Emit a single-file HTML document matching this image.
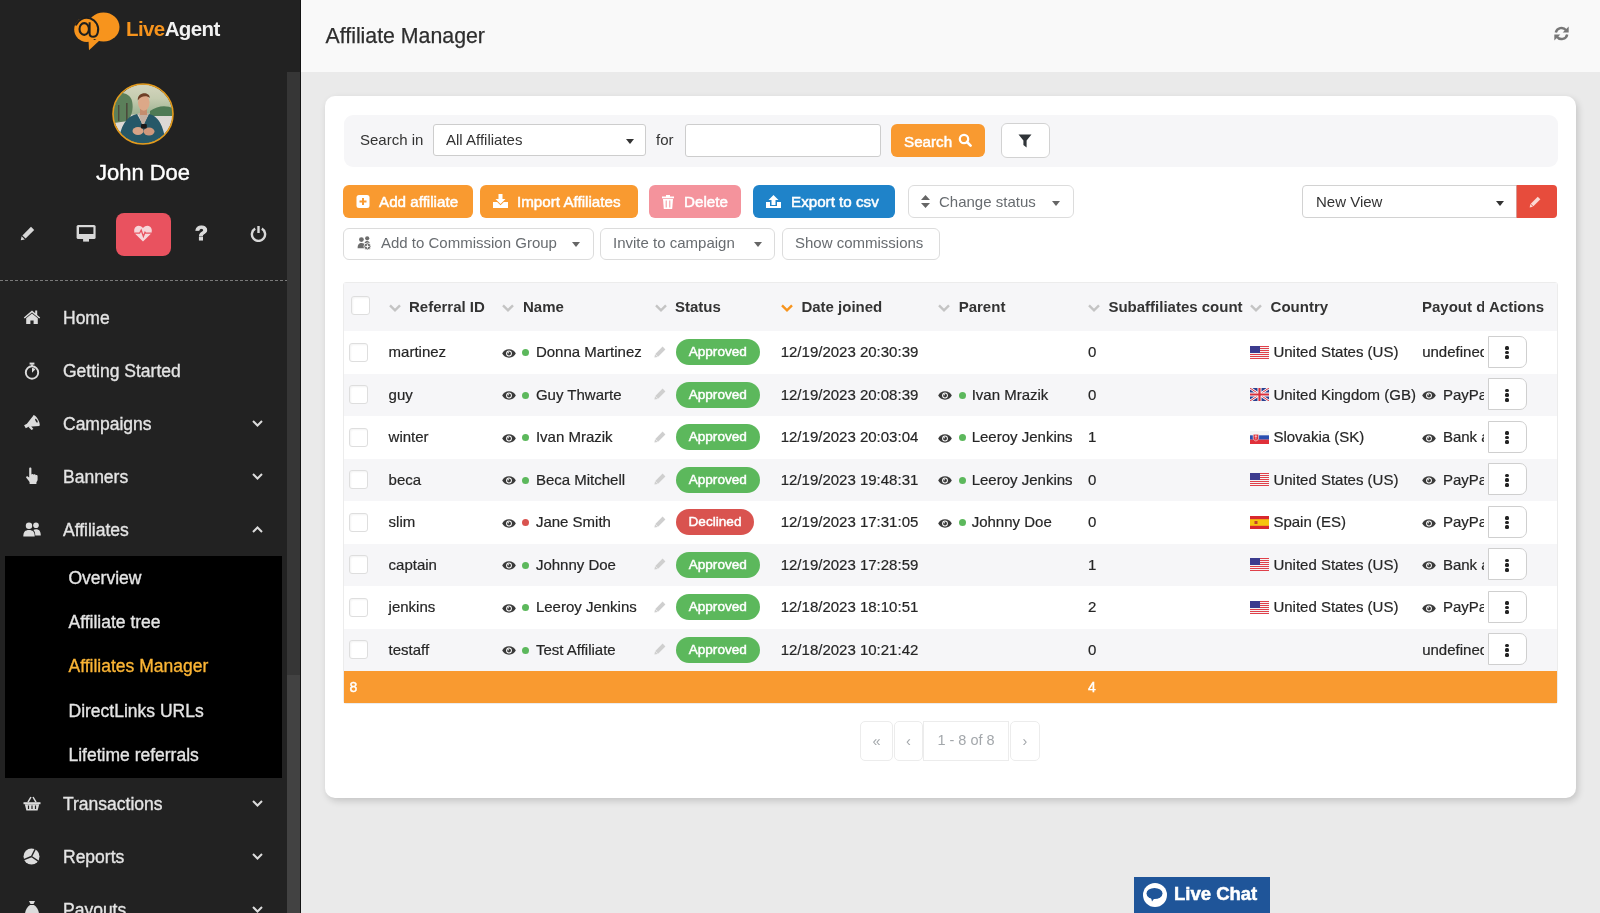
<!DOCTYPE html>
<html><head><meta charset="utf-8"><title>Affiliate Manager</title>
<style>
*{box-sizing:border-box;margin:0;padding:0}
html,body{width:1600px;height:913px;overflow:hidden;background:#eaeaea;font-family:"Liberation Sans", sans-serif;color:#333}
.abs{position:absolute}
#sb{position:absolute;left:0;top:0;width:300px;height:913px;background:#222222;overflow:hidden}
.mi{position:absolute;left:63px;font-size:17.5px;color:#e4e4e4;-webkit-text-stroke:0.35px #e4e4e4;white-space:nowrap;line-height:20px}
.mic{position:absolute;left:23px;width:18px;height:18px}
.chev{position:absolute;left:252px}
.smi{position:absolute;left:68.5px;font-size:17.5px;color:#e4e4e4;-webkit-text-stroke:0.35px currentColor;white-space:nowrap;line-height:20px}
#hdr{position:absolute;left:300px;top:0;width:1300px;height:72px;background:#f9f9f9}
#card{position:absolute;left:325px;top:96px;width:1251px;height:702px;background:#fff;border-radius:10px;box-shadow:2px 3px 7px rgba(0,0,0,.16)}
.btn{position:absolute;top:185px;height:33px;border-radius:6px;color:#fff;font-size:14px;font-weight:bold;white-space:nowrap;line-height:33px}
.obtn{position:absolute;top:228px;height:32px;border-radius:6px;border:1px solid #dcdcdc;background:#fff;color:#666;font-size:15px;white-space:nowrap;line-height:30px}
.cell{position:absolute;font-size:15px;color:#262626;white-space:nowrap;line-height:18px;-webkit-text-stroke:0.2px #262626}
.th{position:absolute;top:298px;font-size:15px;font-weight:bold;color:#333;white-space:nowrap;line-height:18px}
.hch{position:absolute;top:304px}
.cb{position:absolute;width:19px;height:19px;border:1px solid #dedede;border-radius:3px;background:#fff;box-shadow:inset 1px 1px 2px rgba(0,0,0,.05)}
.badge{position:absolute;height:26px;border-radius:13px;color:#fff;font-size:13.6px;-webkit-text-stroke:0.45px #fff;text-align:center;line-height:26px}
.dot{position:absolute;width:7px;height:7px;border-radius:50%}
.eye{position:absolute}
.act{position:absolute;left:1488px;width:39px;height:32px;border:1px solid #cfcfcf;border-radius:0 7px 7px 0;background:#fff}
.act i{position:absolute;left:16px;width:4px;height:3.8px;border-radius:1.5px;background:#222}
.pg{position:absolute;top:721px;height:40px;border:1px solid #ececec;background:#fff;color:#a3a7ab;text-align:center;line-height:38px;font-size:14.5px}
</style></head><body><div id="root" style="position:absolute;left:0;top:0;width:1600px;height:913px;overflow:hidden;will-change:transform">

<div id="sb">
<div class="abs" style="left:287px;top:72px;width:12.5px;height:603px;background:#363636"></div>
<div class="abs" style="left:287px;top:675px;width:12.5px;height:238px;background:#424242"></div>
<svg class="abs" style="left:74px;top:11px" width="48" height="40" viewBox="0 0 48 40">
<ellipse cx="29.5" cy="16" rx="16" ry="14.6" fill="#f7941d"/>
<path d="M14.5 29 L15 39.2 L26 29z" fill="#f7941d"/>
<circle cx="12.6" cy="18.6" r="12.4" fill="#f7941d"/>
<path d="M1.7 14.5 A11.6 11.6 0 0 1 23.8 21.5 Q22.8 25.8 19.2 25.8 Q15.6 25.8 15.6 22.5 V11.2" fill="none" stroke="#1e1e1e" stroke-width="2"/>
<ellipse cx="10.2" cy="18" rx="4.7" ry="5.9" fill="none" stroke="#1e1e1e" stroke-width="2.1"/>
</svg>
<div class="abs" style="left:126px;top:15px;font-size:20.5px;font-weight:bold;letter-spacing:-0.6px;line-height:28px;white-space:nowrap"><span style="color:#f7941d">Live</span><span style="color:#f2f2f2">Agent</span></div>
<svg class="abs" style="left:112px;top:83px" width="62" height="62" viewBox="0 0 62 62">
<defs><clipPath id="av"><circle cx="31" cy="31" r="29.5"/></clipPath>
<linearGradient id="avbg" x1="0" y1="0" x2="0" y2="1"><stop offset="0" stop-color="#d6d6bf"/><stop offset=".25" stop-color="#c5ccb0"/><stop offset=".5" stop-color="#9fb393"/><stop offset=".52" stop-color="#dcd8d4"/><stop offset="1" stop-color="#e0dcd8"/></linearGradient></defs>
<g clip-path="url(#av)">
<rect width="62" height="62" fill="url(#avbg)"/>
<path d="M2 12 C8 8 18 10 20 18 C22 26 19 34 16 38 L2 40z" fill="#5b7f5a"/>
<path d="M38 28 C46 22 56 22 62 26 V33 H38z" fill="#4f7a55"/>
<rect x="14" y="20" width="1.6" height="18" fill="#4b4a3c"/>
<rect x="6" y="22" width="1.4" height="16" fill="#4b4a3c"/>
<path d="M6 62 C8 44 14 33 25 31 L31 42 L37 31 C46 33 52 42 54 62z" fill="#265868"/>
<path d="M26 30 L31 44 L37 30z" fill="#c4b0a2"/>
<rect x="28" y="24" width="7" height="8" fill="#c48d6e"/>
<ellipse cx="31.8" cy="19.5" rx="5.8" ry="8.2" fill="#dca888"/>
<path d="M25.8 17.5 C25 9 37.5 8 37.8 15 C35 12.5 29 12.5 25.8 17.5z" fill="#6e3f26"/>
<ellipse cx="26" cy="48" rx="5.5" ry="4" fill="#d8a487"/><ellipse cx="37" cy="48.5" rx="5.5" ry="4" fill="#d0987c"/>
<rect x="29" y="41" width="5.8" height="4.5" rx="1" fill="#1a1a1a"/>
</g>
<circle cx="31" cy="31" r="30" fill="none" stroke="#e49b1b" stroke-width="1.6"/>
</svg>
<div class="abs" style="left:0;width:287px;top:160px;text-align:center;font-size:22px;color:#fff;line-height:26px;padding-right:1px;-webkit-text-stroke:0.4px #fff">John Doe</div>
<div class="abs" style="left:116px;top:213px;width:55px;height:43px;border-radius:8px;background:#e9525f"></div>
<svg class="abs" style="left:20px;top:226px" width="15" height="15" viewBox="0 0 15 15"><path d="M11 0.8l3.2 3.2-8.6 8.6-3.2-3.2z" fill="#d8d8d8"/><path d="M1.6 10.2l3.2 3.2-4 0.8z" fill="#d8d8d8"/></svg>
<svg class="abs" style="left:76px;top:224px" width="20" height="18" viewBox="0 0 20 18"><rect x="0.6" y="1" width="19" height="14" rx="1.6" fill="#d8d8d8"/><rect x="3" y="3.2" width="14.4" height="6.8" fill="#222"/><rect x="7.1" y="15" width="5.9" height="2.6" fill="#d8d8d8"/></svg>
<svg class="abs" style="left:134px;top:225px" width="18" height="17" viewBox="0 0 18 17"><path d="M9 16.5L1.6 9.2C-0.4 7.2-0.3 3.6 1.9 1.8 3.9 0.2 6.8 0.6 9 3 11.2 0.6 14.1 0.2 16.1 1.8 18.3 3.6 18.4 7.2 16.4 9.2z" fill="#f6d6da"/><path d="M1 8.2h4.6l1.6-3 2.2 6.2 1.6-4.2 0.9 1h5.2" fill="none" stroke="#e9525f" stroke-width="1.3"/></svg>
<div class="abs" style="left:195px;top:220.5px;font-size:21px;font-weight:bold;color:#dcdcdc;line-height:24px;-webkit-text-stroke:1.1px #dcdcdc">?</div>
<svg class="abs" style="left:250px;top:225px" width="17" height="17" viewBox="0 0 17 17"><path d="M5.2 3.6A6.6 6.6 0 1 0 11.8 3.6" fill="none" stroke="#d8d8d8" stroke-width="2.4"/><path d="M8.5 1v7" stroke="#d8d8d8" stroke-width="2.4"/></svg>
<div class="abs" style="left:0;top:280px;width:287px;height:1px;background:repeating-linear-gradient(90deg,#7a7a7a 0 3px,transparent 3px 5px)"></div>
<div class="abs" style="left:23px;top:309px;line-height:0"><svg width="18" height="16" viewBox="0 0 18 16"><path d="M9 1.5L0.8 8.4l1 1.1L9 3.5l7.2 6 1-1.1-3-2.5V1.6h-2v2.6z" fill="#dcdcdc"/><path d="M3.2 9.2L9 4.4l5.8 4.8V15h-4.2v-3.6H7.4V15H3.2z" fill="#dcdcdc"/></svg></div>
<div class="mi" style="top:308.3px">Home</div>
<div class="abs" style="left:24px;top:362px;line-height:0"><svg width="16" height="18" viewBox="0 0 16 18"><circle cx="8" cy="10.5" r="6.2" fill="none" stroke="#dcdcdc" stroke-width="1.9"/><rect x="5.6" y="0.6" width="4.8" height="2" fill="#dcdcdc"/><rect x="7.1" y="2.4" width="1.8" height="2.2" fill="#dcdcdc"/><path d="M8 10.8V5.9A4.9 4.9 0 0 1 11.4 7.3z" fill="#dcdcdc"/></svg></div>
<div class="mi" style="top:361.3px">Getting Started</div>
<div class="abs" style="left:23px;top:415px;line-height:0"><svg width="18" height="16" viewBox="0 0 18 16"><g transform="rotate(-28 9 8)"><path d="M1 6.2h3.2L14 2v12L4.2 9.8H1z" fill="#dcdcdc"/><ellipse cx="14" cy="8" rx="2" ry="6" fill="#dcdcdc"/><ellipse cx="14" cy="8" rx="0.9" ry="2.2" fill="#222"/><path d="M4 9.5l1.2 4.5h2.2L6.6 9.9z" fill="#dcdcdc"/></g></svg></div>
<div class="mi" style="top:414.3px">Campaigns</div>
<svg class="chev" style="top:419.5px" width="11" height="7" viewBox="0 0 11 7"><path d="M1 1l4.5 4.5L10 1" fill="none" stroke="#dcdcdc" stroke-width="2"/></svg>
<div class="abs" style="left:25px;top:467px;line-height:0"><svg width="14" height="18" viewBox="0 0 14 18"><path d="M4.2 1.6c0-1.4 2.2-1.4 2.2 0V7.5c0.4-0.8 2-0.8 2.2 0.3 0.5-0.8 2-0.6 2.1 0.4 0.6-0.6 1.9-0.3 1.9 0.8v3.6c0 1-0.6 2-1.2 2.6H4.8L1.3 10.8c-0.7-0.9 0.5-2.2 1.5-1.4l1.4 1.2z" fill="#dcdcdc"/><rect x="4.6" y="14.6" width="6.8" height="2.4" fill="#dcdcdc"/></svg></div>
<div class="mi" style="top:467.3px">Banners</div>
<svg class="chev" style="top:472.5px" width="11" height="7" viewBox="0 0 11 7"><path d="M1 1l4.5 4.5L10 1" fill="none" stroke="#dcdcdc" stroke-width="2"/></svg>
<div class="abs" style="left:23px;top:522px;line-height:0"><svg width="18" height="15" viewBox="0 0 18 15"><circle cx="6" cy="3.8" r="3.2" fill="#dcdcdc"/><path d="M0.3 14.5c0-4.5 1.8-6.5 5.7-6.5s5.7 2 5.7 6.5z" fill="#dcdcdc"/><circle cx="13" cy="3.2" r="2.8" fill="#dcdcdc"/><path d="M12.3 13.5h5.5c0-4.2-1.6-6.2-4.8-6.2-1.2 0-2 0.3-2.6 0.8 1.2 1.2 1.9 3 1.9 5.4z" fill="#dcdcdc"/></svg></div>
<div class="mi" style="top:520.3px">Affiliates</div>
<svg class="chev" style="top:525.5px" width="11" height="7" viewBox="0 0 11 7"><path d="M1 6l4.5-4.5L10 6" fill="none" stroke="#dcdcdc" stroke-width="2"/></svg>
<div class="abs" style="left:23px;top:796px;line-height:0"><svg width="18" height="15" viewBox="0 0 18 15"><path d="M0.5 6.2h17v2H0.5z" fill="#dcdcdc"/><path d="M1.8 8.2h14.4l-1.6 6.3H3.4z" fill="#dcdcdc"/><path d="M5 6.2L8 1M13 6.2L10 1" stroke="#dcdcdc" stroke-width="1.5"/><path d="M5.5 9.5v3.5M9 9.5v3.5M12.5 9.5v3.5" stroke="#222" stroke-width="1.2"/></svg></div>
<div class="mi" style="top:794.3px">Transactions</div>
<svg class="chev" style="top:799.5px" width="11" height="7" viewBox="0 0 11 7"><path d="M1 1l4.5 4.5L10 1" fill="none" stroke="#dcdcdc" stroke-width="2"/></svg>
<div class="abs" style="left:23px;top:848px;line-height:0"><svg width="17" height="17" viewBox="0 0 17 17"><circle cx="8.5" cy="8.5" r="8" fill="#dcdcdc"/><path d="M8.5 8.5L12.22 1.19M8.5 8.5L15.30 13.09M8.5 8.5L0.95 11.70" stroke="#222" stroke-width="1.4"/></svg></div>
<div class="mi" style="top:847.3px">Reports</div>
<svg class="chev" style="top:852.5px" width="11" height="7" viewBox="0 0 11 7"><path d="M1 1l4.5 4.5L10 1" fill="none" stroke="#dcdcdc" stroke-width="2"/></svg>
<div class="abs" style="left:24px;top:900px;line-height:0"><svg width="16" height="18" viewBox="0 0 16 18"><path d="M5 1h6l-1.5 3h-3z" fill="#dcdcdc"/><path d="M6 5h4c3 2 5 6 5 9 0 2.5-2 3.5-7 3.5S1 16.5 1 14c0-3 2-7 5-9z" fill="#dcdcdc"/></svg></div>
<div class="mi" style="top:900.3px">Payouts</div>
<svg class="chev" style="top:905.5px" width="11" height="7" viewBox="0 0 11 7"><path d="M1 1l4.5 4.5L10 1" fill="none" stroke="#dcdcdc" stroke-width="2"/></svg>
<div class="abs" style="left:5px;top:556px;width:277px;height:222px;background:#000"></div>
<div class="smi" style="top:568.1px;color:#e4e4e4">Overview</div>
<div class="smi" style="top:612.1px;color:#e4e4e4">Affiliate tree</div>
<div class="smi" style="top:656.1px;color:#fbb535">Affiliates Manager</div>
<div class="smi" style="top:700.6px;color:#e4e4e4">DirectLinks URLs</div>
<div class="smi" style="top:744.6px;color:#e4e4e4">Lifetime referrals</div>
</div>
<div id="hdr"></div>
<div class="abs" style="left:299.5px;top:0;width:1px;height:913px;background:#141414"></div>
<div class="abs" style="left:325.5px;top:22.9px;font-size:21.3px;color:#2e2e2e;line-height:26px;white-space:nowrap;-webkit-text-stroke:0.25px #2e2e2e">Affiliate Manager</div>
<svg class="abs" style="left:1554px;top:26.3px" width="15" height="15" viewBox="0 0 15 15"><path d="M1.8 6.6A5.8 5.8 0 0 1 12.1 4.3" fill="none" stroke="#777" stroke-width="2.5"/><path d="M14.7 0.4V6.4H8.7z" fill="#777"/><path d="M13.2 8.4A5.8 5.8 0 0 1 2.9 10.7" fill="none" stroke="#777" stroke-width="2.5"/><path d="M0.3 14.6V8.6H6.3z" fill="#777"/></svg>
<div id="card"></div>
<div class="abs" style="left:344px;top:115px;width:1214px;height:52px;background:#f6f6f8;border-radius:9px"></div>
<div class="abs" style="left:360px;top:131px;font-size:15px;color:#333;line-height:18px">Search in</div>
<div class="abs" style="left:433px;top:124px;width:213px;height:32px;border:1px solid #cdcdcd;border-radius:3px;background:#fff"></div>
<div class="abs" style="left:446px;top:131px;font-size:15px;color:#333;line-height:18px">All Affiliates</div>
<svg class="abs" style="left:626px;top:139px" width="8" height="5" viewBox="0 0 8 5"><path d="M0 0h8L4 5z" fill="#333"/></svg>
<div class="abs" style="left:656px;top:131px;font-size:15px;color:#333;line-height:18px">for</div>
<div class="abs" style="left:685px;top:124px;width:196px;height:33px;border:1px solid #cdcdcd;border-radius:3px;background:#fff"></div>
<div class="abs" style="left:891px;top:124px;width:94px;height:33px;border-radius:6px;background:#f99a30"></div>
<div class="abs" style="left:904px;top:132.6px;font-size:15.2px;color:#fff;line-height:18px;-webkit-text-stroke:0.5px #fff">Search</div>
<svg class="abs" style="left:958px;top:133px" width="14" height="14" viewBox="0 0 14 14"><circle cx="6" cy="6" r="4.2" fill="none" stroke="#fff" stroke-width="2.2"/><path d="M9 9l3.6 3.6" stroke="#fff" stroke-width="2.6" stroke-linecap="round"/></svg>
<div class="abs" style="left:1001px;top:123px;width:49px;height:35px;border:1px solid #d2d2d2;border-radius:6px;background:#fff"></div>
<svg class="abs" style="left:1018px;top:133.5px" width="14" height="14" viewBox="0 0 14 14"><path d="M0.5 0.5h13L8.6 6.5V13.5L5.4 11V6.5z" fill="#2f3438"/></svg>
<div class="btn" style="left:343px;width:130px;background:#f99a30"></div>
<svg class="abs" style="left:356px;top:195px" width="14" height="13" viewBox="0 0 14 13"><rect x="0.5" y="0" width="13" height="13" rx="2.5" fill="#fff"/><path d="M7 3v7M3.5 6.5h7" stroke="#f99a30" stroke-width="2"/></svg>
<div class="abs" style="left:379px;top:193.1px;font-size:15.2px;color:#fff;line-height:18px;-webkit-text-stroke:0.5px #fff;white-space:nowrap">Add affiliate</div>
<div class="btn" style="left:480px;width:158px;background:#f99a30"></div>
<svg class="abs" style="left:493px;top:194px" width="15" height="14" viewBox="0 0 15 14"><path d="M5.5 0h4v5h3L7.5 10 2.5 5h3z" fill="#fff"/><path d="M0 8h4.2l3.3 3.3L10.8 8H15v6H0z" fill="#fff"/></svg>
<div class="abs" style="left:517px;top:193.1px;font-size:15.2px;color:#fff;line-height:18px;-webkit-text-stroke:0.5px #fff;white-space:nowrap">Import Affiliates</div>
<div class="btn" style="left:649px;width:92px;background:#f4939c"></div>
<svg class="abs" style="left:662px;top:195px" width="12" height="14" viewBox="0 0 12 14"><rect x="0" y="1.5" width="12" height="1.8" fill="#fff"/><rect x="4" y="0" width="4" height="2" fill="#fff"/><path d="M1 4h10l-0.8 10H1.8z" fill="#fff"/><path d="M4.2 5.5v7M7.8 5.5v7" stroke="#f4939c" stroke-width="1"/></svg>
<div class="abs" style="left:684px;top:193.1px;font-size:15.2px;color:#fff;line-height:18px;-webkit-text-stroke:0.5px #fff;white-space:nowrap">Delete</div>
<div class="btn" style="left:753px;width:142px;background:#1f83c9"></div>
<svg class="abs" style="left:766px;top:194px" width="15" height="14" viewBox="0 0 15 14"><path d="M5.5 11h4V6h3L7.5 1 2.5 6h3z" fill="#fff"/><path d="M0 8h4v4h7V8h4v6H0z" fill="#fff"/></svg>
<div class="abs" style="left:791px;top:193.1px;font-size:15.2px;color:#fff;line-height:18px;-webkit-text-stroke:0.5px #fff;white-space:nowrap">Export to csv</div>
<div class="abs" style="left:908px;top:185px;width:166px;height:33px;border:1px solid #dcdcdc;border-radius:6px;background:#fff"></div>
<svg class="abs" style="left:921px;top:195px" width="9" height="13" viewBox="0 0 9 13"><path d="M4.5 0L9 5H0z M4.5 13L0 8h9z" fill="#666"/></svg>
<div class="abs" style="left:939px;top:193px;font-size:15px;color:#686c70;line-height:18px;white-space:nowrap">Change status</div>
<svg class="abs" style="left:1052px;top:200.6px" width="8" height="5" viewBox="0 0 8 5"><path d="M0 0h8L4 5z" fill="#666"/></svg>
<div class="abs" style="left:1302px;top:185px;width:216px;height:33px;border:1px solid #d2d2d2;border-radius:4px 0 0 4px;background:#fff"></div>
<div class="abs" style="left:1316px;top:193px;font-size:15px;color:#333;line-height:18px;white-space:nowrap">New View</div>
<svg class="abs" style="left:1496px;top:201.2px" width="8" height="5" viewBox="0 0 8 5"><path d="M0 0h8L4 5z" fill="#333"/></svg>
<div class="abs" style="left:1515.5px;top:185px;width:41px;height:33px;border-radius:0 4px 4px 0;background:#e74c3c;border-left:1.5px solid #d99a94"></div>
<svg class="abs" style="left:1528.6px;top:196px" width="12" height="12" viewBox="0 0 11 11"><path d="M8 0.6l2.4 2.4-6.4 6.4-2.4-2.4z" fill="#fbd9d4"/><path d="M1.2 7.4l2.4 2.4-3 0.8z" fill="#fbd9d4"/></svg>
<div class="obtn" style="left:343px;width:251px"></div>
<svg class="abs" style="left:357px;top:236px" width="14" height="14" viewBox="0 0 14 14"><circle cx="4.4" cy="3.6" r="2.4" fill="#6d6d6d"/><path d="M0.6 12.2C0.6 8.3 2 6.9 4.4 6.9S8 8 8.2 9.6L7.4 12.2z" fill="#6d6d6d"/><circle cx="10.2" cy="2.3" r="2.1" fill="#6d6d6d"/><path d="M7.4 7.2C7.9 5.6 9 5 10.2 5c1.6 0 2.4 1 2.6 2.6z" fill="#6d6d6d"/><circle cx="10.4" cy="10.4" r="3.5" fill="#6d6d6d" stroke="#fff" stroke-width="0.8"/><path d="M10.4 8.3v4.2M8.3 10.4h4.2" stroke="#fff" stroke-width="1"/></svg>
<div class="abs" style="left:381px;top:234.2px;font-size:15px;color:#686c70;line-height:18px;white-space:nowrap">Add to Commission Group</div>
<svg class="abs" style="left:572px;top:242px" width="8" height="5" viewBox="0 0 8 5"><path d="M0 0h8L4 5z" fill="#666"/></svg>
<div class="obtn" style="left:600px;width:175px"></div>
<div class="abs" style="left:613px;top:234.2px;font-size:15px;color:#686c70;line-height:18px;white-space:nowrap">Invite to campaign</div>
<svg class="abs" style="left:754px;top:242px" width="8" height="5" viewBox="0 0 8 5"><path d="M0 0h8L4 5z" fill="#666"/></svg>
<div class="obtn" style="left:782px;width:158px"></div>
<div class="abs" style="left:795px;top:234.2px;font-size:15px;color:#686c70;line-height:18px;white-space:nowrap">Show commissions</div>
<div class="abs" style="left:343px;top:282px;width:1215px;height:422px;border:1px solid #ececec;border-radius:3px;background:#fff"></div>
<div class="abs" style="left:344px;top:283px;width:1213px;height:48px;background:#f6f6f8"></div>
<div class="cb" style="left:351px;top:296px"></div>
<svg class="hch" style="left:388.6px" width="12" height="8" viewBox="0 0 12 8"><path d="M1 1.3l5 5 5-5" fill="none" stroke="#c4c4c4" stroke-width="2.4"/></svg>
<div class="th" style="left:409.0px">Referral ID</div>
<svg class="hch" style="left:501.6px" width="12" height="8" viewBox="0 0 12 8"><path d="M1 1.3l5 5 5-5" fill="none" stroke="#c4c4c4" stroke-width="2.4"/></svg>
<div class="th" style="left:523.0px">Name</div>
<svg class="hch" style="left:654.6px" width="12" height="8" viewBox="0 0 12 8"><path d="M1 1.3l5 5 5-5" fill="none" stroke="#c4c4c4" stroke-width="2.4"/></svg>
<div class="th" style="left:675.0px">Status</div>
<svg class="hch" style="left:781.3px" width="12" height="8" viewBox="0 0 12 8"><path d="M1 1.3l5 5 5-5" fill="none" stroke="#f7941d" stroke-width="2.4"/></svg>
<div class="th" style="left:801.4px">Date joined</div>
<svg class="hch" style="left:938.0px" width="12" height="8" viewBox="0 0 12 8"><path d="M1 1.3l5 5 5-5" fill="none" stroke="#c4c4c4" stroke-width="2.4"/></svg>
<div class="th" style="left:958.7px">Parent</div>
<svg class="hch" style="left:1088.0px" width="12" height="8" viewBox="0 0 12 8"><path d="M1 1.3l5 5 5-5" fill="none" stroke="#c4c4c4" stroke-width="2.4"/></svg>
<div class="th" style="left:1108.4px">Subaffiliates count</div>
<svg class="hch" style="left:1250.3px" width="12" height="8" viewBox="0 0 12 8"><path d="M1 1.3l5 5 5-5" fill="none" stroke="#c4c4c4" stroke-width="2.4"/></svg>
<div class="th" style="left:1270.6px">Country</div>
<div class="th" style="left:1422px;width:62px;overflow:hidden">Payout data</div>
<div class="th" style="left:1489px">Actions</div>
<div class="cb" style="left:349px;top:342.75px"></div>
<div class="cell" style="left:388.6px;top:343.25px">martinez</div>
<div class="abs" style="left:501.6px;top:348.75px;line-height:0"><svg class="eye" width="14" height="9" viewBox="0 0 14 9"><path d="M7 0.3C3.8 0.3 1.3 2.3 0.2 4.5 1.3 6.7 3.8 8.7 7 8.7s5.7-2 6.8-4.2C12.7 2.3 10.2 0.3 7 0.3z" fill="#3a3a3a"/><circle cx="7" cy="4.5" r="2.9" fill="#fff"/><circle cx="7" cy="4.5" r="1.9" fill="#3a3a3a"/><circle cx="6.2" cy="3.8" r="0.7" fill="#fff"/></svg></div>
<div class="dot" style="left:522.3px;top:349.45px;background:#5cb85c"></div>
<div class="cell" style="left:535.9px;top:343.25px">Donna Martinez</div>
<div class="abs" style="left:654px;top:345.75px;line-height:0"><svg width="12" height="12" viewBox="0 0 12 12"><path d="M8.6 0.6l2.8 2.8-7.3 7.3-2.8-2.8z" fill="#cfcfcf"/><path d="M1 8.2l2.8 2.8L0.4 11.6z" fill="#cfcfcf"/></svg></div>
<div class="badge" style="left:675.6px;top:339.25px;width:84.4px;background:#5cb85c">Approved</div>
<div class="cell" style="left:780.7px;top:343.25px">12/19/2023 20:30:39</div>
<div class="cell" style="left:1088px;top:343.25px">0</div>
<div class="abs" style="left:1250px;top:346px;line-height:0"><svg class="flag" width="19" height="13" viewBox="0 0 19 13"><rect width="19" height="13" fill="#f4f4f4"/><rect x="0" y="0" width="19" height="1" fill="#e0404a"/><rect x="0" y="2" width="19" height="1" fill="#e0404a"/><rect x="0" y="4" width="19" height="1" fill="#e0404a"/><rect x="0" y="6" width="19" height="1" fill="#e0404a"/><rect x="0" y="8" width="19" height="1" fill="#e0404a"/><rect x="0" y="10" width="19" height="1" fill="#e0404a"/><rect x="0" y="12" width="19" height="1" fill="#e0404a"/><rect width="10" height="7" fill="#3c3b8e"/></svg></div>
<div class="cell" style="left:1273.4px;top:343.25px">United States (US)</div>
<div class="cell" style="left:1422.2px;top:343.25px;width:62px;overflow:hidden">undefined</div>
<div class="act" style="top:335.85px"><i style="top:9.2px"></i><i style="top:13.8px"></i><i style="top:18.4px"></i></div>
<div class="abs" style="left:344px;top:373.50px;width:1213px;height:42.5px;background:#f6f6f8"></div>
<div class="cb" style="left:349px;top:385.25px"></div>
<div class="cell" style="left:388.6px;top:385.75px">guy</div>
<div class="abs" style="left:501.6px;top:391.25px;line-height:0"><svg class="eye" width="14" height="9" viewBox="0 0 14 9"><path d="M7 0.3C3.8 0.3 1.3 2.3 0.2 4.5 1.3 6.7 3.8 8.7 7 8.7s5.7-2 6.8-4.2C12.7 2.3 10.2 0.3 7 0.3z" fill="#3a3a3a"/><circle cx="7" cy="4.5" r="2.9" fill="#fff"/><circle cx="7" cy="4.5" r="1.9" fill="#3a3a3a"/><circle cx="6.2" cy="3.8" r="0.7" fill="#fff"/></svg></div>
<div class="dot" style="left:522.3px;top:391.95px;background:#5cb85c"></div>
<div class="cell" style="left:535.9px;top:385.75px">Guy Thwarte</div>
<div class="abs" style="left:654px;top:388.25px;line-height:0"><svg width="12" height="12" viewBox="0 0 12 12"><path d="M8.6 0.6l2.8 2.8-7.3 7.3-2.8-2.8z" fill="#cfcfcf"/><path d="M1 8.2l2.8 2.8L0.4 11.6z" fill="#cfcfcf"/></svg></div>
<div class="badge" style="left:675.6px;top:381.75px;width:84.4px;background:#5cb85c">Approved</div>
<div class="cell" style="left:780.7px;top:385.75px">12/19/2023 20:08:39</div>
<div class="abs" style="left:938px;top:391.25px;line-height:0"><svg class="eye" width="14" height="9" viewBox="0 0 14 9"><path d="M7 0.3C3.8 0.3 1.3 2.3 0.2 4.5 1.3 6.7 3.8 8.7 7 8.7s5.7-2 6.8-4.2C12.7 2.3 10.2 0.3 7 0.3z" fill="#3a3a3a"/><circle cx="7" cy="4.5" r="2.9" fill="#fff"/><circle cx="7" cy="4.5" r="1.9" fill="#3a3a3a"/><circle cx="6.2" cy="3.8" r="0.7" fill="#fff"/></svg></div>
<div class="dot" style="left:958.7px;top:391.95px;background:#5cb85c"></div>
<div class="cell" style="left:971.7px;top:385.75px">Ivan Mrazik</div>
<div class="cell" style="left:1088px;top:385.75px">0</div>
<div class="abs" style="left:1250px;top:388px;line-height:0"><svg class="flag" width="19" height="13" viewBox="0 0 19 13"><rect width="19" height="13" fill="#2a3f8f"/><path d="M0 0L19 13M19 0L0 13" stroke="#fff" stroke-width="2.6"/><path d="M0 0L19 13M19 0L0 13" stroke="#d8303c" stroke-width="1"/><path d="M9.5 0v13M0 6.5h19" stroke="#fff" stroke-width="4"/><path d="M9.5 0v13M0 6.5h19" stroke="#d8303c" stroke-width="2.2"/></svg></div>
<div class="cell" style="left:1273.4px;top:385.75px">United Kingdom (GB)</div>
<div class="abs" style="left:1422.2px;top:391.25px;line-height:0"><svg class="eye" width="14" height="9" viewBox="0 0 14 9"><path d="M7 0.3C3.8 0.3 1.3 2.3 0.2 4.5 1.3 6.7 3.8 8.7 7 8.7s5.7-2 6.8-4.2C12.7 2.3 10.2 0.3 7 0.3z" fill="#3a3a3a"/><circle cx="7" cy="4.5" r="2.9" fill="#fff"/><circle cx="7" cy="4.5" r="1.9" fill="#3a3a3a"/><circle cx="6.2" cy="3.8" r="0.7" fill="#fff"/></svg></div>
<div class="cell" style="left:1442.9px;top:385.75px;width:41px;overflow:hidden">PayPal</div>
<div class="act" style="top:378.35px"><i style="top:9.2px"></i><i style="top:13.8px"></i><i style="top:18.4px"></i></div>
<div class="cb" style="left:349px;top:427.75px"></div>
<div class="cell" style="left:388.6px;top:428.25px">winter</div>
<div class="abs" style="left:501.6px;top:433.75px;line-height:0"><svg class="eye" width="14" height="9" viewBox="0 0 14 9"><path d="M7 0.3C3.8 0.3 1.3 2.3 0.2 4.5 1.3 6.7 3.8 8.7 7 8.7s5.7-2 6.8-4.2C12.7 2.3 10.2 0.3 7 0.3z" fill="#3a3a3a"/><circle cx="7" cy="4.5" r="2.9" fill="#fff"/><circle cx="7" cy="4.5" r="1.9" fill="#3a3a3a"/><circle cx="6.2" cy="3.8" r="0.7" fill="#fff"/></svg></div>
<div class="dot" style="left:522.3px;top:434.45px;background:#5cb85c"></div>
<div class="cell" style="left:535.9px;top:428.25px">Ivan Mrazik</div>
<div class="abs" style="left:654px;top:430.75px;line-height:0"><svg width="12" height="12" viewBox="0 0 12 12"><path d="M8.6 0.6l2.8 2.8-7.3 7.3-2.8-2.8z" fill="#cfcfcf"/><path d="M1 8.2l2.8 2.8L0.4 11.6z" fill="#cfcfcf"/></svg></div>
<div class="badge" style="left:675.6px;top:424.25px;width:84.4px;background:#5cb85c">Approved</div>
<div class="cell" style="left:780.7px;top:428.25px">12/19/2023 20:03:04</div>
<div class="abs" style="left:938px;top:433.75px;line-height:0"><svg class="eye" width="14" height="9" viewBox="0 0 14 9"><path d="M7 0.3C3.8 0.3 1.3 2.3 0.2 4.5 1.3 6.7 3.8 8.7 7 8.7s5.7-2 6.8-4.2C12.7 2.3 10.2 0.3 7 0.3z" fill="#3a3a3a"/><circle cx="7" cy="4.5" r="2.9" fill="#fff"/><circle cx="7" cy="4.5" r="1.9" fill="#3a3a3a"/><circle cx="6.2" cy="3.8" r="0.7" fill="#fff"/></svg></div>
<div class="dot" style="left:958.7px;top:434.45px;background:#5cb85c"></div>
<div class="cell" style="left:971.7px;top:428.25px">Leeroy Jenkins</div>
<div class="cell" style="left:1088px;top:428.25px">1</div>
<div class="abs" style="left:1250px;top:431px;line-height:0"><svg class="flag" width="19" height="13" viewBox="0 0 19 13"><rect width="19" height="4.4" fill="#f4f4f4"/><rect y="4.3" width="19" height="4.4" fill="#2a4fb0"/><rect y="8.6" width="19" height="4.4" fill="#e0303a"/><path d="M3.2 3.2h5.4v4.2c0 1.6-2.7 2.6-2.7 2.6s-2.7-1-2.7-2.6z" fill="#e0303a" stroke="#fff" stroke-width=".6"/><path d="M5.9 4v4.5M4.6 5.3h2.6" stroke="#fff" stroke-width=".6"/></svg></div>
<div class="cell" style="left:1273.4px;top:428.25px">Slovakia (SK)</div>
<div class="abs" style="left:1422.2px;top:433.75px;line-height:0"><svg class="eye" width="14" height="9" viewBox="0 0 14 9"><path d="M7 0.3C3.8 0.3 1.3 2.3 0.2 4.5 1.3 6.7 3.8 8.7 7 8.7s5.7-2 6.8-4.2C12.7 2.3 10.2 0.3 7 0.3z" fill="#3a3a3a"/><circle cx="7" cy="4.5" r="2.9" fill="#fff"/><circle cx="7" cy="4.5" r="1.9" fill="#3a3a3a"/><circle cx="6.2" cy="3.8" r="0.7" fill="#fff"/></svg></div>
<div class="cell" style="left:1442.9px;top:428.25px;width:41px;overflow:hidden">Bank account</div>
<div class="act" style="top:420.85px"><i style="top:9.2px"></i><i style="top:13.8px"></i><i style="top:18.4px"></i></div>
<div class="abs" style="left:344px;top:458.50px;width:1213px;height:42.5px;background:#f6f6f8"></div>
<div class="cb" style="left:349px;top:470.25px"></div>
<div class="cell" style="left:388.6px;top:470.75px">beca</div>
<div class="abs" style="left:501.6px;top:476.25px;line-height:0"><svg class="eye" width="14" height="9" viewBox="0 0 14 9"><path d="M7 0.3C3.8 0.3 1.3 2.3 0.2 4.5 1.3 6.7 3.8 8.7 7 8.7s5.7-2 6.8-4.2C12.7 2.3 10.2 0.3 7 0.3z" fill="#3a3a3a"/><circle cx="7" cy="4.5" r="2.9" fill="#fff"/><circle cx="7" cy="4.5" r="1.9" fill="#3a3a3a"/><circle cx="6.2" cy="3.8" r="0.7" fill="#fff"/></svg></div>
<div class="dot" style="left:522.3px;top:476.95px;background:#5cb85c"></div>
<div class="cell" style="left:535.9px;top:470.75px">Beca Mitchell</div>
<div class="abs" style="left:654px;top:473.25px;line-height:0"><svg width="12" height="12" viewBox="0 0 12 12"><path d="M8.6 0.6l2.8 2.8-7.3 7.3-2.8-2.8z" fill="#cfcfcf"/><path d="M1 8.2l2.8 2.8L0.4 11.6z" fill="#cfcfcf"/></svg></div>
<div class="badge" style="left:675.6px;top:466.75px;width:84.4px;background:#5cb85c">Approved</div>
<div class="cell" style="left:780.7px;top:470.75px">12/19/2023 19:48:31</div>
<div class="abs" style="left:938px;top:476.25px;line-height:0"><svg class="eye" width="14" height="9" viewBox="0 0 14 9"><path d="M7 0.3C3.8 0.3 1.3 2.3 0.2 4.5 1.3 6.7 3.8 8.7 7 8.7s5.7-2 6.8-4.2C12.7 2.3 10.2 0.3 7 0.3z" fill="#3a3a3a"/><circle cx="7" cy="4.5" r="2.9" fill="#fff"/><circle cx="7" cy="4.5" r="1.9" fill="#3a3a3a"/><circle cx="6.2" cy="3.8" r="0.7" fill="#fff"/></svg></div>
<div class="dot" style="left:958.7px;top:476.95px;background:#5cb85c"></div>
<div class="cell" style="left:971.7px;top:470.75px">Leeroy Jenkins</div>
<div class="cell" style="left:1088px;top:470.75px">0</div>
<div class="abs" style="left:1250px;top:473px;line-height:0"><svg class="flag" width="19" height="13" viewBox="0 0 19 13"><rect width="19" height="13" fill="#f4f4f4"/><rect x="0" y="0" width="19" height="1" fill="#e0404a"/><rect x="0" y="2" width="19" height="1" fill="#e0404a"/><rect x="0" y="4" width="19" height="1" fill="#e0404a"/><rect x="0" y="6" width="19" height="1" fill="#e0404a"/><rect x="0" y="8" width="19" height="1" fill="#e0404a"/><rect x="0" y="10" width="19" height="1" fill="#e0404a"/><rect x="0" y="12" width="19" height="1" fill="#e0404a"/><rect width="10" height="7" fill="#3c3b8e"/></svg></div>
<div class="cell" style="left:1273.4px;top:470.75px">United States (US)</div>
<div class="abs" style="left:1422.2px;top:476.25px;line-height:0"><svg class="eye" width="14" height="9" viewBox="0 0 14 9"><path d="M7 0.3C3.8 0.3 1.3 2.3 0.2 4.5 1.3 6.7 3.8 8.7 7 8.7s5.7-2 6.8-4.2C12.7 2.3 10.2 0.3 7 0.3z" fill="#3a3a3a"/><circle cx="7" cy="4.5" r="2.9" fill="#fff"/><circle cx="7" cy="4.5" r="1.9" fill="#3a3a3a"/><circle cx="6.2" cy="3.8" r="0.7" fill="#fff"/></svg></div>
<div class="cell" style="left:1442.9px;top:470.75px;width:41px;overflow:hidden">PayPal</div>
<div class="act" style="top:463.35px"><i style="top:9.2px"></i><i style="top:13.8px"></i><i style="top:18.4px"></i></div>
<div class="cb" style="left:349px;top:512.75px"></div>
<div class="cell" style="left:388.6px;top:513.25px">slim</div>
<div class="abs" style="left:501.6px;top:518.75px;line-height:0"><svg class="eye" width="14" height="9" viewBox="0 0 14 9"><path d="M7 0.3C3.8 0.3 1.3 2.3 0.2 4.5 1.3 6.7 3.8 8.7 7 8.7s5.7-2 6.8-4.2C12.7 2.3 10.2 0.3 7 0.3z" fill="#3a3a3a"/><circle cx="7" cy="4.5" r="2.9" fill="#fff"/><circle cx="7" cy="4.5" r="1.9" fill="#3a3a3a"/><circle cx="6.2" cy="3.8" r="0.7" fill="#fff"/></svg></div>
<div class="dot" style="left:522.3px;top:519.45px;background:#d9534f"></div>
<div class="cell" style="left:535.9px;top:513.25px">Jane Smith</div>
<div class="abs" style="left:654px;top:515.75px;line-height:0"><svg width="12" height="12" viewBox="0 0 12 12"><path d="M8.6 0.6l2.8 2.8-7.3 7.3-2.8-2.8z" fill="#cfcfcf"/><path d="M1 8.2l2.8 2.8L0.4 11.6z" fill="#cfcfcf"/></svg></div>
<div class="badge" style="left:676px;top:509.25px;width:78px;background:#d9534f">Declined</div>
<div class="cell" style="left:780.7px;top:513.25px">12/19/2023 17:31:05</div>
<div class="abs" style="left:938px;top:518.75px;line-height:0"><svg class="eye" width="14" height="9" viewBox="0 0 14 9"><path d="M7 0.3C3.8 0.3 1.3 2.3 0.2 4.5 1.3 6.7 3.8 8.7 7 8.7s5.7-2 6.8-4.2C12.7 2.3 10.2 0.3 7 0.3z" fill="#3a3a3a"/><circle cx="7" cy="4.5" r="2.9" fill="#fff"/><circle cx="7" cy="4.5" r="1.9" fill="#3a3a3a"/><circle cx="6.2" cy="3.8" r="0.7" fill="#fff"/></svg></div>
<div class="dot" style="left:958.7px;top:519.45px;background:#5cb85c"></div>
<div class="cell" style="left:971.7px;top:513.25px">Johnny Doe</div>
<div class="cell" style="left:1088px;top:513.25px">0</div>
<div class="abs" style="left:1250px;top:516px;line-height:0"><svg class="flag" width="19" height="13" viewBox="0 0 19 13"><rect width="19" height="13" fill="#d8282e"/><rect y="3.2" width="19" height="6.6" fill="#f6c40e"/><rect x="4.5" y="5" width="3" height="3" fill="#c0402a"/></svg></div>
<div class="cell" style="left:1273.4px;top:513.25px">Spain (ES)</div>
<div class="abs" style="left:1422.2px;top:518.75px;line-height:0"><svg class="eye" width="14" height="9" viewBox="0 0 14 9"><path d="M7 0.3C3.8 0.3 1.3 2.3 0.2 4.5 1.3 6.7 3.8 8.7 7 8.7s5.7-2 6.8-4.2C12.7 2.3 10.2 0.3 7 0.3z" fill="#3a3a3a"/><circle cx="7" cy="4.5" r="2.9" fill="#fff"/><circle cx="7" cy="4.5" r="1.9" fill="#3a3a3a"/><circle cx="6.2" cy="3.8" r="0.7" fill="#fff"/></svg></div>
<div class="cell" style="left:1442.9px;top:513.25px;width:41px;overflow:hidden">PayPal</div>
<div class="act" style="top:505.85px"><i style="top:9.2px"></i><i style="top:13.8px"></i><i style="top:18.4px"></i></div>
<div class="abs" style="left:344px;top:543.50px;width:1213px;height:42.5px;background:#f6f6f8"></div>
<div class="cb" style="left:349px;top:555.25px"></div>
<div class="cell" style="left:388.6px;top:555.75px">captain</div>
<div class="abs" style="left:501.6px;top:561.25px;line-height:0"><svg class="eye" width="14" height="9" viewBox="0 0 14 9"><path d="M7 0.3C3.8 0.3 1.3 2.3 0.2 4.5 1.3 6.7 3.8 8.7 7 8.7s5.7-2 6.8-4.2C12.7 2.3 10.2 0.3 7 0.3z" fill="#3a3a3a"/><circle cx="7" cy="4.5" r="2.9" fill="#fff"/><circle cx="7" cy="4.5" r="1.9" fill="#3a3a3a"/><circle cx="6.2" cy="3.8" r="0.7" fill="#fff"/></svg></div>
<div class="dot" style="left:522.3px;top:561.95px;background:#5cb85c"></div>
<div class="cell" style="left:535.9px;top:555.75px">Johnny Doe</div>
<div class="abs" style="left:654px;top:558.25px;line-height:0"><svg width="12" height="12" viewBox="0 0 12 12"><path d="M8.6 0.6l2.8 2.8-7.3 7.3-2.8-2.8z" fill="#cfcfcf"/><path d="M1 8.2l2.8 2.8L0.4 11.6z" fill="#cfcfcf"/></svg></div>
<div class="badge" style="left:675.6px;top:551.75px;width:84.4px;background:#5cb85c">Approved</div>
<div class="cell" style="left:780.7px;top:555.75px">12/19/2023 17:28:59</div>
<div class="cell" style="left:1088px;top:555.75px">1</div>
<div class="abs" style="left:1250px;top:558px;line-height:0"><svg class="flag" width="19" height="13" viewBox="0 0 19 13"><rect width="19" height="13" fill="#f4f4f4"/><rect x="0" y="0" width="19" height="1" fill="#e0404a"/><rect x="0" y="2" width="19" height="1" fill="#e0404a"/><rect x="0" y="4" width="19" height="1" fill="#e0404a"/><rect x="0" y="6" width="19" height="1" fill="#e0404a"/><rect x="0" y="8" width="19" height="1" fill="#e0404a"/><rect x="0" y="10" width="19" height="1" fill="#e0404a"/><rect x="0" y="12" width="19" height="1" fill="#e0404a"/><rect width="10" height="7" fill="#3c3b8e"/></svg></div>
<div class="cell" style="left:1273.4px;top:555.75px">United States (US)</div>
<div class="abs" style="left:1422.2px;top:561.25px;line-height:0"><svg class="eye" width="14" height="9" viewBox="0 0 14 9"><path d="M7 0.3C3.8 0.3 1.3 2.3 0.2 4.5 1.3 6.7 3.8 8.7 7 8.7s5.7-2 6.8-4.2C12.7 2.3 10.2 0.3 7 0.3z" fill="#3a3a3a"/><circle cx="7" cy="4.5" r="2.9" fill="#fff"/><circle cx="7" cy="4.5" r="1.9" fill="#3a3a3a"/><circle cx="6.2" cy="3.8" r="0.7" fill="#fff"/></svg></div>
<div class="cell" style="left:1442.9px;top:555.75px;width:41px;overflow:hidden">Bank account</div>
<div class="act" style="top:548.35px"><i style="top:9.2px"></i><i style="top:13.8px"></i><i style="top:18.4px"></i></div>
<div class="cb" style="left:349px;top:597.75px"></div>
<div class="cell" style="left:388.6px;top:598.25px">jenkins</div>
<div class="abs" style="left:501.6px;top:603.75px;line-height:0"><svg class="eye" width="14" height="9" viewBox="0 0 14 9"><path d="M7 0.3C3.8 0.3 1.3 2.3 0.2 4.5 1.3 6.7 3.8 8.7 7 8.7s5.7-2 6.8-4.2C12.7 2.3 10.2 0.3 7 0.3z" fill="#3a3a3a"/><circle cx="7" cy="4.5" r="2.9" fill="#fff"/><circle cx="7" cy="4.5" r="1.9" fill="#3a3a3a"/><circle cx="6.2" cy="3.8" r="0.7" fill="#fff"/></svg></div>
<div class="dot" style="left:522.3px;top:604.45px;background:#5cb85c"></div>
<div class="cell" style="left:535.9px;top:598.25px">Leeroy Jenkins</div>
<div class="abs" style="left:654px;top:600.75px;line-height:0"><svg width="12" height="12" viewBox="0 0 12 12"><path d="M8.6 0.6l2.8 2.8-7.3 7.3-2.8-2.8z" fill="#cfcfcf"/><path d="M1 8.2l2.8 2.8L0.4 11.6z" fill="#cfcfcf"/></svg></div>
<div class="badge" style="left:675.6px;top:594.25px;width:84.4px;background:#5cb85c">Approved</div>
<div class="cell" style="left:780.7px;top:598.25px">12/18/2023 18:10:51</div>
<div class="cell" style="left:1088px;top:598.25px">2</div>
<div class="abs" style="left:1250px;top:601px;line-height:0"><svg class="flag" width="19" height="13" viewBox="0 0 19 13"><rect width="19" height="13" fill="#f4f4f4"/><rect x="0" y="0" width="19" height="1" fill="#e0404a"/><rect x="0" y="2" width="19" height="1" fill="#e0404a"/><rect x="0" y="4" width="19" height="1" fill="#e0404a"/><rect x="0" y="6" width="19" height="1" fill="#e0404a"/><rect x="0" y="8" width="19" height="1" fill="#e0404a"/><rect x="0" y="10" width="19" height="1" fill="#e0404a"/><rect x="0" y="12" width="19" height="1" fill="#e0404a"/><rect width="10" height="7" fill="#3c3b8e"/></svg></div>
<div class="cell" style="left:1273.4px;top:598.25px">United States (US)</div>
<div class="abs" style="left:1422.2px;top:603.75px;line-height:0"><svg class="eye" width="14" height="9" viewBox="0 0 14 9"><path d="M7 0.3C3.8 0.3 1.3 2.3 0.2 4.5 1.3 6.7 3.8 8.7 7 8.7s5.7-2 6.8-4.2C12.7 2.3 10.2 0.3 7 0.3z" fill="#3a3a3a"/><circle cx="7" cy="4.5" r="2.9" fill="#fff"/><circle cx="7" cy="4.5" r="1.9" fill="#3a3a3a"/><circle cx="6.2" cy="3.8" r="0.7" fill="#fff"/></svg></div>
<div class="cell" style="left:1442.9px;top:598.25px;width:41px;overflow:hidden">PayPal</div>
<div class="act" style="top:590.85px"><i style="top:9.2px"></i><i style="top:13.8px"></i><i style="top:18.4px"></i></div>
<div class="abs" style="left:344px;top:628.50px;width:1213px;height:42.5px;background:#f6f6f8"></div>
<div class="cb" style="left:349px;top:640.25px"></div>
<div class="cell" style="left:388.6px;top:640.75px">testaff</div>
<div class="abs" style="left:501.6px;top:646.25px;line-height:0"><svg class="eye" width="14" height="9" viewBox="0 0 14 9"><path d="M7 0.3C3.8 0.3 1.3 2.3 0.2 4.5 1.3 6.7 3.8 8.7 7 8.7s5.7-2 6.8-4.2C12.7 2.3 10.2 0.3 7 0.3z" fill="#3a3a3a"/><circle cx="7" cy="4.5" r="2.9" fill="#fff"/><circle cx="7" cy="4.5" r="1.9" fill="#3a3a3a"/><circle cx="6.2" cy="3.8" r="0.7" fill="#fff"/></svg></div>
<div class="dot" style="left:522.3px;top:646.95px;background:#5cb85c"></div>
<div class="cell" style="left:535.9px;top:640.75px">Test Affiliate</div>
<div class="abs" style="left:654px;top:643.25px;line-height:0"><svg width="12" height="12" viewBox="0 0 12 12"><path d="M8.6 0.6l2.8 2.8-7.3 7.3-2.8-2.8z" fill="#cfcfcf"/><path d="M1 8.2l2.8 2.8L0.4 11.6z" fill="#cfcfcf"/></svg></div>
<div class="badge" style="left:675.6px;top:636.75px;width:84.4px;background:#5cb85c">Approved</div>
<div class="cell" style="left:780.7px;top:640.75px">12/18/2023 10:21:42</div>
<div class="cell" style="left:1088px;top:640.75px">0</div>
<div class="cell" style="left:1422.2px;top:640.75px;width:62px;overflow:hidden">undefined</div>
<div class="act" style="top:633.35px"><i style="top:9.2px"></i><i style="top:13.8px"></i><i style="top:18.4px"></i></div>
<div class="abs" style="left:344px;top:671px;width:1213px;height:32px;background:#f99a30"></div>
<div class="abs" style="left:349.5px;top:678px;font-size:14px;color:#fff;line-height:18px;-webkit-text-stroke:0.4px #fff">8</div>
<div class="abs" style="left:1088px;top:678px;font-size:14px;color:#fff;line-height:18px;-webkit-text-stroke:0.4px #fff">4</div>
<div class="pg" style="left:860px;width:33px;border-radius:5px">&laquo;</div>
<div class="pg" style="left:894px;width:29px;border-radius:5px">&lsaquo;</div>
<div class="pg" style="left:923px;width:86px;line-height:36.4px">1 - 8 of 8</div>
<div class="pg" style="left:1010px;width:30px;border-radius:5px">&rsaquo;</div>
<div class="abs" style="left:1134px;top:877px;width:136px;height:36px;background:#1f5599"></div>
<svg class="abs" style="left:1142px;top:882px" width="26" height="26" viewBox="0 0 26 26"><circle cx="13" cy="13" r="12" fill="#fff"/><ellipse cx="12.5" cy="11.5" rx="8" ry="5.5" fill="#1f5599"/><path d="M9 15.5l1 4 3-4z" fill="#1f5599"/></svg>
<div class="abs" style="left:1174px;top:883px;font-size:18.5px;font-weight:bold;color:#fff;line-height:22px;white-space:nowrap;-webkit-text-stroke:0.5px #fff">Live Chat</div>
</div></body></html>
